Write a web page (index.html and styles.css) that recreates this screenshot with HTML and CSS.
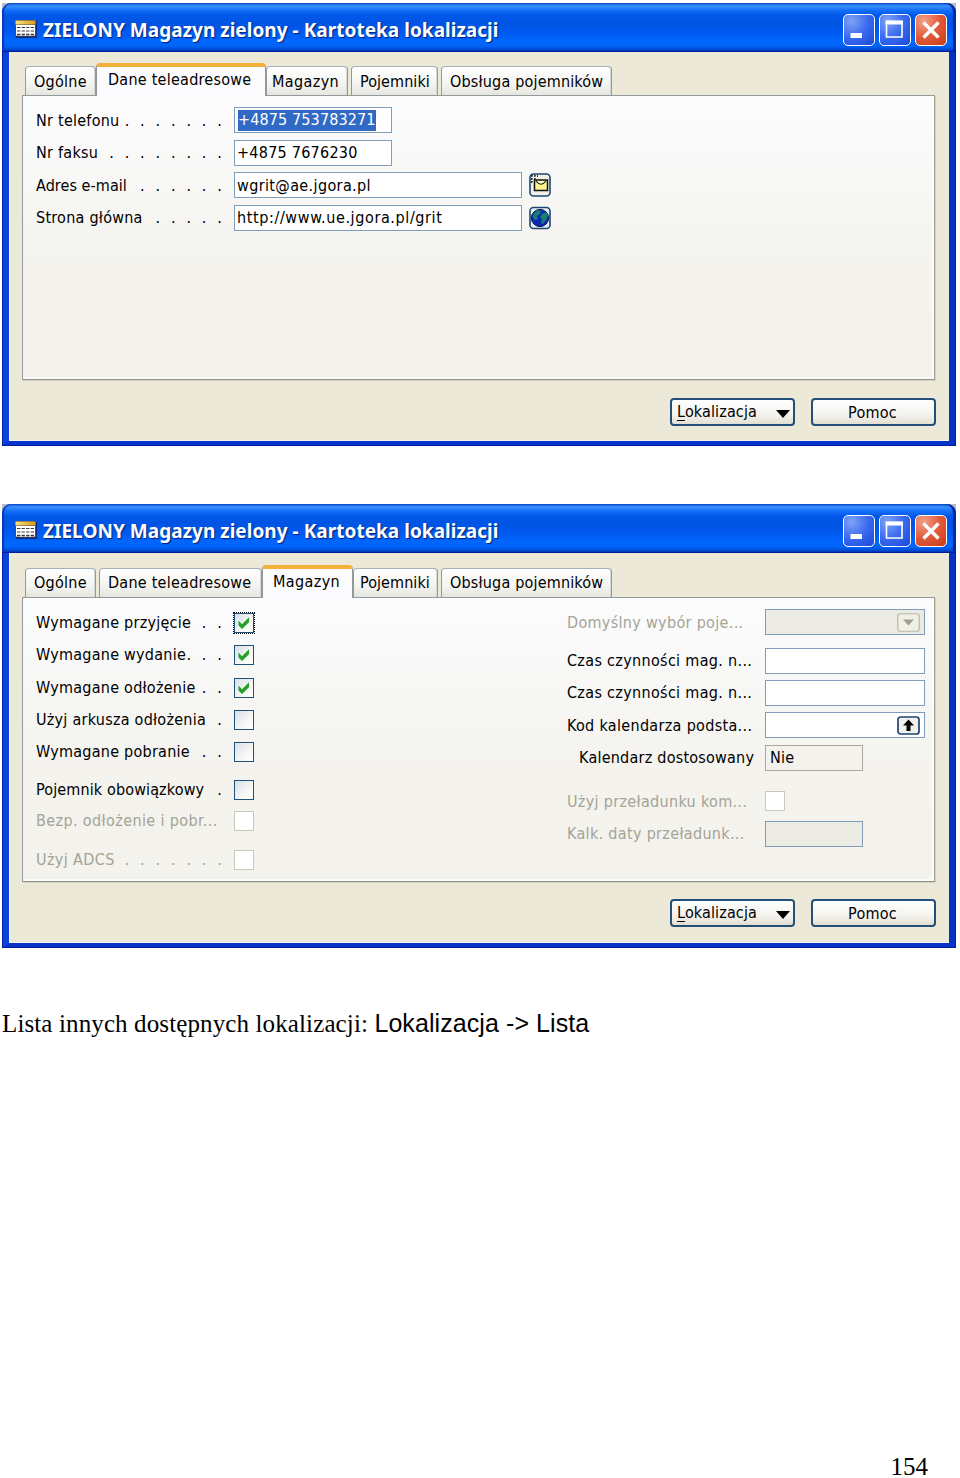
FILE: index.html
```html
<!DOCTYPE html>
<html lang="pl">
<head>
<meta charset="utf-8">
<title>Kartoteka lokalizacji</title>
<link rel="stylesheet" href="styles.css">
</head>
<body>
<svg width="0" height="0" class="defs" aria-hidden="true">
  <defs>
    <linearGradient id="band" x1="0" x2="1" y1="0" y2="0"><stop offset="0" stop-color="#f7e27a"/><stop offset="1" stop-color="#d99a1c"/></linearGradient>
    <symbol id="card" viewBox="0 0 22 18">
      <rect x="1" y="1" width="21" height="17" fill="#0a2a80"/>
      <rect x="0" y="0" width="21" height="16.500" fill="#4a4a46"/>
      <rect x="0.500" y="0.500" width="20" height="4" fill="url(#band)"/>
      <rect x="1" y="5" width="19" height="10.500" fill="#fff"/>
      <path d="M2 7.500H19M2 11H19M2 14.300H19" stroke="#3c3c3c" stroke-width="1.200"/>
      <path d="M6 5V16M10.500 5V16M15 5V16" stroke="#fff" stroke-width="1.200"/>
    </symbol>
    <symbol id="min" viewBox="0 0 32 32"><rect x="7.500" y="19" width="11.500" height="5" fill="#fff"/></symbol>
    <symbol id="max" viewBox="0 0 32 32"><path d="M7.500 7.500H23V23H7.500Z" fill="none" stroke="#fff" stroke-width="1.600"/><path d="M6.700 8.500H23.800" stroke="#fff" stroke-width="4"/></symbol>
    <symbol id="close" viewBox="0 0 32 32"><path d="M8.500 8.500L23.500 23.500M23.500 8.500L8.500 23.500" stroke="#fff" stroke-width="3.400"/></symbol>
    <symbol id="check" viewBox="0 0 18 18"><path d="M3.500 6.500L7 10.200L14 3.300V8.200L7 15L3.500 11.500Z" fill="#27a02b"/></symbol>
  </defs>
</svg>

<main class="page">
  <section class="window">
    <header class="titlebar">
      <svg class="app-icon"><use href="#card"/></svg>
      <h1 class="title">ZIELONY Magazyn zielony - Kartoteka lokalizacji</h1>
      <div class="controls">
        <span class="ctl"><svg><use href="#min"/></svg></span>
        <span class="ctl"><svg><use href="#max"/></svg></span>
        <span class="ctl ctl-close"><svg><use href="#close"/></svg></span>
      </div>
    </header>
    <div class="client">
      <nav class="tabs">
        <span class="tab tab-general joined">Ogólne</span>
        <span class="tab tab-address active joined">Dane teleadresowe</span>
        <span class="tab tab-store after-active wide">Magazyn</span>
        <span class="tab tab-bins tight">Pojemniki</span>
        <span class="tab tab-service">Obsługa pojemników</span>
      </nav>
      <div class="panel contact">
        <div class="row"><span class="label">Nr telefonu</span><span class="dots">. . . . . . .</span><span class="field"><mark class="selected snug">+4875 753783271</mark></span></div>
        <div class="row"><span class="label">Nr faksu</span><span class="dots">. . . . . . . .</span><span class="field">+4875 7676230</span></div>
        <div class="row with-action"><span class="label tight">Adres e-mail</span><span class="dots">. . . . . .</span><span class="field long wide">wgrit@ae.jgora.pl</span>
          <svg class="action" viewBox="0 0 22 24"><rect x="1" y="1" width="20" height="22" rx="3.500" fill="#f1f1ea" stroke="#1d4672" stroke-width="1.600"/><path d="M2 3H9M2 6H7M2 9H6M3 2V10M6 2V8" stroke="#111" stroke-width="1.300" stroke-dasharray="1.500 1.500"/><rect x="5.500" y="7" width="13" height="10.500" fill="#fdf48c" stroke="#111" stroke-width="1.500"/><path d="M7 8Q12 14.500 17 8" fill="#fffbd0" stroke="#111" stroke-width="1.200"/></svg></div>
        <div class="row with-action"><span class="label">Strona główna</span><span class="dots">. . . . .</span><span class="field long wider">http://www.ue.jgora.pl/grit</span>
          <svg class="action" viewBox="0 0 22 24"><rect x="1" y="1.500" width="20" height="21" rx="3.500" fill="#eaf0f5" stroke="#1d4672" stroke-width="1.600"/><circle cx="11" cy="12" r="8.600" fill="#0b27b8" stroke="#0a1650"/><path d="M5 7L9 4L12 5L11 8L8 10L9 13L6 14L3.500 11ZM13 8L17 6L19 10L17 14L14 18L12 17L13 13L11 11Z" fill="#16806f"/></svg></div>
      </div>
      <footer class="buttons">
        <span class="button menu"><span class="snug"><u>L</u>okalizacja</span><i class="arrow"></i></span>
        <span class="button help">Pomoc</span>
      </footer>
    </div>
  </section>

  <section class="window second">
    <header class="titlebar">
      <svg class="app-icon"><use href="#card"/></svg>
      <h1 class="title">ZIELONY Magazyn zielony - Kartoteka lokalizacji</h1>
      <div class="controls">
        <span class="ctl"><svg><use href="#min"/></svg></span>
        <span class="ctl"><svg><use href="#max"/></svg></span>
        <span class="ctl ctl-close"><svg><use href="#close"/></svg></span>
      </div>
    </header>
    <div class="client">
      <nav class="tabs">
        <span class="tab tab-general">Ogólne</span>
        <span class="tab tab-address joined">Dane teleadresowe</span>
        <span class="tab tab-store active joined wide">Magazyn</span>
        <span class="tab tab-bins after-active tight">Pojemniki</span>
        <span class="tab tab-service">Obsługa pojemników</span>
      </nav>
      <div class="panel split">
        <div class="column left">
          <div class="row"><span class="label">Wymagane przyjęcie</span><span class="dots">. .</span><span class="box focused"><svg><use href="#check"/></svg></span></div>
          <div class="row"><span class="label">Wymagane wydanie</span><span class="dots">. . .</span><span class="box"><svg><use href="#check"/></svg></span></div>
          <div class="row"><span class="label">Wymagane odłożenie</span><span class="dots">. .</span><span class="box"><svg><use href="#check"/></svg></span></div>
          <div class="row"><span class="label">Użyj arkusza odłożenia</span><span class="dots">.</span><span class="box"></span></div>
          <div class="row"><span class="label">Wymagane pobranie</span><span class="dots">. .</span><span class="box"></span></div>
          <div class="row spaced"><span class="label snug">Pojemnik obowiązkowy</span><span class="dots">.</span><span class="box"></span></div>
          <div class="row close disabled"><span class="label wide">Bezp. odłożenie i pobr...</span><span class="box"></span></div>
          <div class="row spaced disabled"><span class="label wide">Użyj ADCS</span><span class="dots">. . . . . . .</span><span class="box"></span></div>
        </div>
        <div class="column right">
          <div class="row disabled"><span class="label">Domyślny wybór poje...</span><span class="field full"><svg class="picker" viewBox="0 0 23 19"><rect x="0.750" y="0.750" width="21.500" height="17.500" rx="2.500" fill="#f0efe6" stroke="#bab9a6" stroke-width="1.200"/><path d="M6 6.500H17L11.500 12.500Z" fill="#a09f8f"/></svg></span></div>
          <div class="row spaced"><span class="label">Czas czynności mag. n...</span><span class="field full"></span></div>
          <div class="row"><span class="label">Czas czynności mag. n...</span><span class="field full"></span></div>
          <div class="row"><span class="label">Kod kalendarza podsta...</span><span class="field full"><svg class="picker" viewBox="0 0 23 19"><rect x="1" y="1" width="21" height="17" rx="2.500" fill="#eff1ee" stroke="#1d4672" stroke-width="1.700"/><path d="M11.500 3.500L17 9.500H13.500V15H9.500V9.500H6Z" fill="#000"/></svg></span></div>
          <div class="row"><span class="label inset">Kalendarz dostosowany</span><span class="field short readonly">Nie</span></div>
          <div class="row nudged disabled"><span class="label">Użyj przeładunku kom...</span><span class="box"></span></div>
          <div class="row disabled"><span class="label">Kalk. daty przeładunk...</span><span class="field short"></span></div>
        </div>
      </div>
      <footer class="buttons">
        <span class="button menu"><span class="snug"><u>L</u>okalizacja</span><i class="arrow"></i></span>
        <span class="button help">Pomoc</span>
      </footer>
    </div>
  </section>

  <p class="caption">Lista innych dostępnych lokalizacji: <span class="path">Lokalizacja -&gt; Lista</span></p>
  <div class="page-number">154</div>
</main>
</body>
</html>
```

FILE: styles.css
```css
* { box-sizing: border-box; }

body {
  margin: 0;
  background: #fff;
  color: #000;
}

.defs { position: absolute; }

.page {
  display: flex;
  flex-direction: column;
  height: 1478px;
  padding: 3px 4px 0 2px;
}

/* Windows */
.window {
  display: flex;
  flex-direction: column;
  flex: none;
  width: 954px;
  height: 443px;
  background: #b9bcc0;
  font: 16px/20px "DejaVu Sans Condensed", "DejaVu Sans", sans-serif;
  letter-spacing: 0.25px;
  white-space: nowrap;
}

.second { margin-top: 58px; height: 444px; }
.second .client { padding-top: 13px; }

.titlebar {
  display: flex;
  align-items: center;
  flex: none;
  height: 48px;
  padding: 6px 9px 0 13px;
  border-radius: 9px 9px 0 0;
  background: linear-gradient(#0a4fd0 0, #3a92fc 3px, #1470fa 7px, #0258ea 12px, #0054e3 20px, #0058ee 28px, #0066fc 38px, #0064f8 43px, #0046cc 47px, #0038b0 48px);
  box-shadow: inset 2px 0 1px #0838c0, inset -3px 0 1px #0428a0;
}

.app-icon { width: 22px; height: 18px; margin-top: -3px; }

.title {
  flex: 1;
  margin: 0 0 0 6px;
  color: #fff;
  font: bold 19px/26px "Noto Sans", sans-serif;
  letter-spacing: 0.03px;
  text-shadow: 1px 1px 1px #03227c;
}

.controls { display: flex; gap: 4px; }

.ctl {
  width: 32px;
  height: 32px;
  border: 1.500px solid #fff;
  border-radius: 5px;
  background: radial-gradient(circle at 25% 20%, #7ea3f4, #3a6af0 50%, #1a48d8);
}

.ctl svg { display: block; width: 32px; height: 32px; margin: -1px; }
.ctl-close { background: radial-gradient(circle at 25% 20%, #f0a088, #e2593a 50%, #c83c14); }

.client {
  flex: 1;
  display: flex;
  flex-direction: column;
  padding: 12px 13px 0 13px;
  border: solid #0a43dc;
  border-width: 0 7px 5px;
  background: #ece9d8;
  box-shadow: inset 1px -1px #f8f6ec, inset 0 1px #f8f6ec;
  border-color: #0a43dc #0633c4 #0633c8 #0a43dc;
  outline: 1.500px solid #0020a0;
  outline-offset: -1.500px;
}

/* Tabs */
.tabs {
  display: flex;
  align-items: flex-end;
  gap: 3px;
  height: 33px;
  margin-bottom: -1px;
  padding-left: 3px;
  position: relative;
}

.tab {
  height: 30px;
  padding: 5px 0 0 9px;
  border: 1px solid #919b9c;
  border-top-color: #a4b0b8;
  border-radius: 4px 4px 0 0;
  background: linear-gradient(#fff, #f4f4f0 60%, #e6e6e0);
  box-shadow: inset -1px 0 #d4d8d8;
}

.second .tab:not(.active) { padding-top: 4px; }

.joined { margin-right: -3px; }
.tab-general { width: 71px; padding-left: 8px; }
.tab-address { width: 163px; padding-left: 8px; }
.tab-address.active { width: 170px; padding-left: 11px; }
.tab-store { width: 82px; padding-left: 5px; }
.tab-store.active { width: 91px; padding-left: 10px; }
.tab-bins { width: 87px; padding-left: 8px; }
.tab-bins.after-active { width: 85px; padding-left: 6px; }
.tab-service { width: 171px; padding-left: 8px; letter-spacing: 0.180px; }

.tab.active {
  height: 33px;
  padding-top: 3px;
  border-top: 4px solid #f3b13c;
  border-bottom: 0;
  background: #fcfcfe;
  box-shadow: none;
}

/* Panels */
.panel {
  flex: none;
  width: 913px;
  height: 285px;
  border: 1.500px solid #919b9c;
  border-color: #919b9c #a0a294 #919488 #919b9c;
  background: linear-gradient(#fcfcfe, #f4f3ee 60%, #f3f2ed);
  box-shadow: inset -2px -2px #fbfbf9, 1px 1px #d5d2c2;
}

.row { display: flex; align-items: center; height: 26px; }
.contact { padding: 11px 0 0 13px; }
.contact .row { width: 356px; margin-bottom: 6.500px; }
.contact .row.with-action { width: 515px; }
.contact .label, .contact .dots { padding-top: 1px; }
.label { flex: 1; }

.dots {
  flex: none;
  margin-right: 9px;
  letter-spacing: 3.150px;
}

.field {
  display: flex;
  align-items: center;
  flex: none;
  width: 158px;
  height: 26px;
  padding: 1px 0 0 2px;
  border: 1.500px solid #7f9db9;
  background: #fff;
}

.long { width: 288px; }
.full { width: 160px; justify-content: flex-end; padding: 0 4px 0 0; }
.short { width: 98px; }
.readonly { padding-left: 4px; border-color: #aca899; background: #f3f2ec; }

.selected { height: 21px; margin-left: 1px; background: #316ac5; color: #fff; }
.action { flex: none; width: 22px; height: 24px; margin-left: 7px; }
.picker { width: 23px; height: 19px; }

.split { display: flex; justify-content: space-between; padding: 11px 9px 0 13px; }
.left { width: 218px; padding-top: 1px; }
.left .row { margin-bottom: 6.300px; }
.left .spaced { margin-top: 12.300px; }
.left .close { margin-top: -1.500px; }
.right { width: 358px; }
.right .row { margin-bottom: 6.400px; }
.right .row.spaced { margin-top: 12.500px; }
.right .row.nudged { margin-top: 17.500px; }
.right .label { flex: none; width: 198px; padding-top: 1px; letter-spacing: 0.320px; }
.right .label.inset { padding-left: 12px; letter-spacing: 0.230px; }

.box {
  flex: none;
  width: 20px;
  height: 20px;
  border: 1.500px solid #1c5180;
  background: linear-gradient(135deg, #d8e0e6, #f6f6f4 60%, #fff);
}

.box svg { display: block; width: 18px; height: 18px; }
.focused { outline: 1.500px dotted #000; }
.disabled { color: #a5a397; }
.disabled .box { border-color: #cac8bb; background: #fff; }
.disabled .field { background: #ebebe4; }

/* Buttons */
.buttons {
  display: flex;
  justify-content: flex-end;
  gap: 16px;
  margin-top: 18px;
}

.button {
  display: flex;
  align-items: center;
  justify-content: center;
  width: 125px;
  height: 28px;
  border: 2px solid #234f78;
  border-radius: 4px;
  background: linear-gradient(#fff, #f4f3ee 60%, #e2dfd2);
}

.menu { justify-content: space-between; padding: 0 3px 0 5px; }
.help { padding: 2px 2px 0 0; }
.second .buttons { margin-top: 17px; }
.buttons u { text-underline-offset: 3px; }

.arrow {
  border: solid transparent;
  border-width: 8px 7.500px 0;
  border-top-color: #000;
  margin-top: 3px;
}

/* Letter fitting */
.tight { letter-spacing: 0.070px; }
.snug { letter-spacing: 0.130px; }
.wide { letter-spacing: 0.380px; }
.wider { letter-spacing: 0.610px; }

/* Document text */
.caption {
  margin: 60px 0 0;
  font: 25px/30px "Liberation Serif", serif;
  letter-spacing: 0.120px;
}

.path { font-family: "Liberation Sans", sans-serif; letter-spacing: 0.080px; }

.page-number {
  margin: auto 28px 0 auto;
  font: 25px/22px "Liberation Serif", serif;
}
```
